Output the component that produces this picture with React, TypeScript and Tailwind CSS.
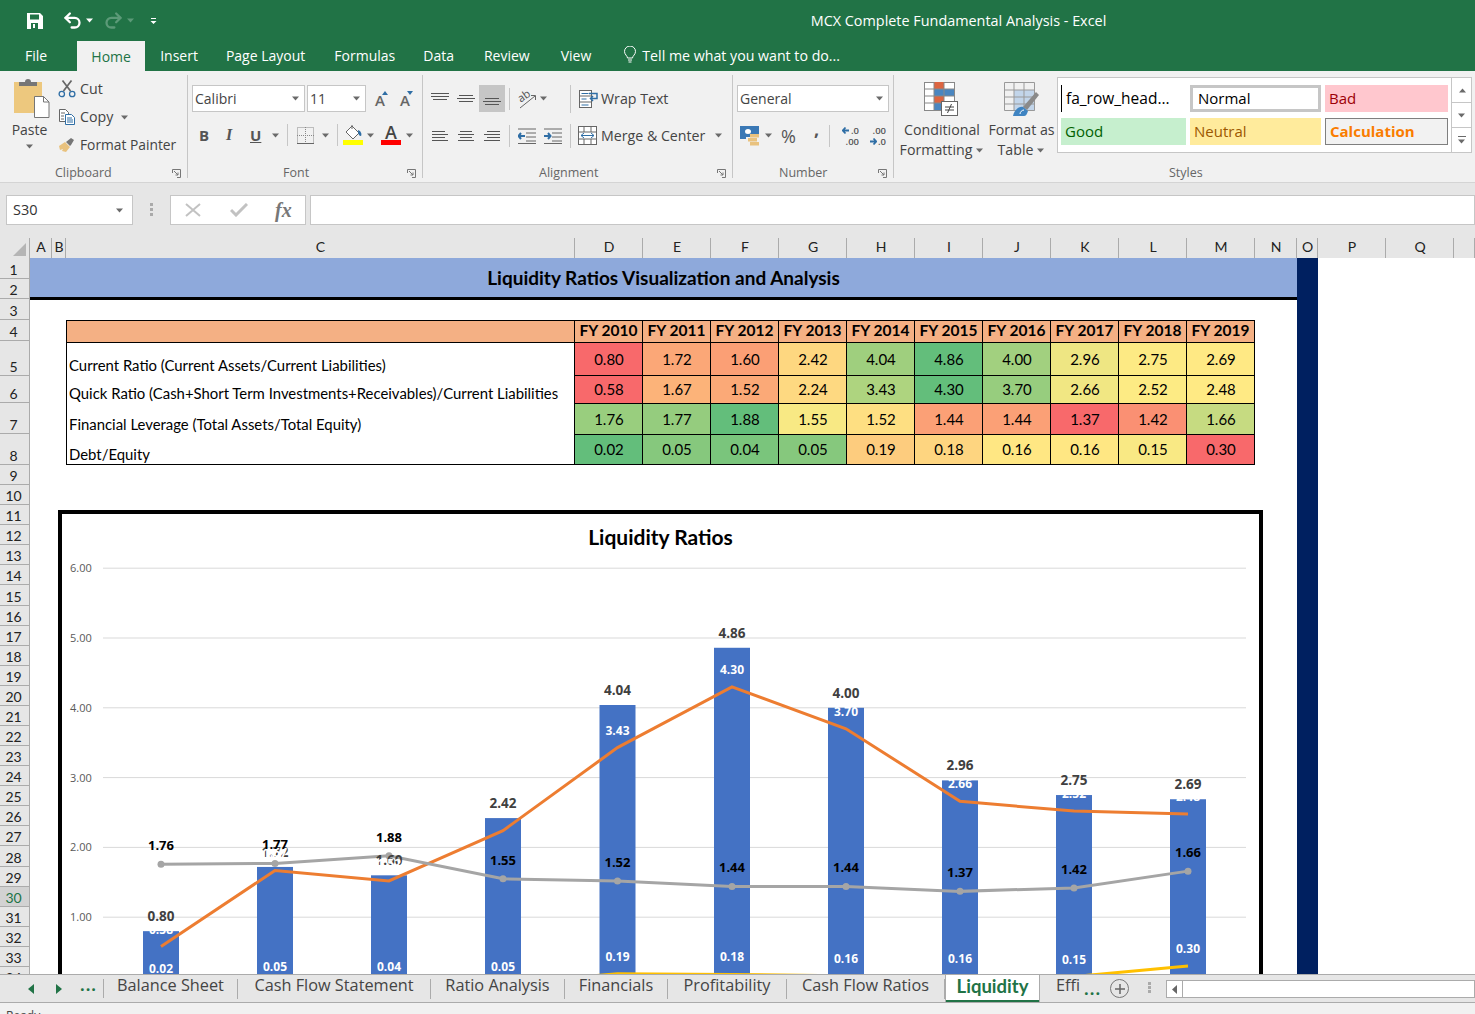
import { Redo2, Undo2 } from 'lucide-react'
import type { ReactNode } from 'react'

const COLUMNS: [string, number][] = [
  ['A', 22], ['B', 14], ['C', 509], ['D', 68], ['E', 68], ['F', 68], ['G', 68], ['H', 68], ['I', 68],
  ['J', 68], ['K', 68], ['L', 68], ['M', 68], ['N', 42], ['O', 21], ['P', 68], ['Q', 68], ['', 21],
]
const FIXED_ROWS = [21, 20, 21, 21, 35, 27, 31, 31]
const YEARS = ['FY 2010', 'FY 2011', 'FY 2012', 'FY 2013', 'FY 2014', 'FY 2015', 'FY 2016', 'FY 2017', 'FY 2018', 'FY 2019']

const CURRENT = [0.8, 1.72, 1.6, 2.42, 4.04, 4.86, 4.0, 2.96, 2.75, 2.69]
const QUICK = [0.58, 1.67, 1.52, 2.24, 3.43, 4.3, 3.7, 2.66, 2.52, 2.48]
const LEVERAGE = [1.76, 1.77, 1.88, 1.55, 1.52, 1.44, 1.44, 1.37, 1.42, 1.66]
const DEBT = [0.02, 0.05, 0.04, 0.05, 0.19, 0.18, 0.16, 0.16, 0.15, 0.3]

const METRICS = [
  { label: 'Current Ratio (Current Assets/Current Liabilities)', values: CURRENT, lowIsGood: false },
  { label: 'Quick Ratio (Cash+Short Term Investments+Receivables)/Current Liabilities', values: QUICK, lowIsGood: false },
  { label: 'Financial Leverage (Total Assets/Total Equity)', values: LEVERAGE, lowIsGood: false },
  { label: 'Debt/Equity', values: DEBT, lowIsGood: true },
]

const TABS = [
  { name: 'Balance Sheet', width: 'w-[134px]' },
  { name: 'Cash Flow Statement', width: 'w-[193px]' },
  { name: 'Ratio Analysis', width: 'w-[134px]' },
  { name: 'Financials', width: 'w-[103px]' },
  { name: 'Profitability', width: 'w-[119px]' },
  { name: 'Cash Flow Ratios', width: 'w-[158px]' },
]

// excel's 3 colour scale: red, yellow at the median, green
function heat(values: number[], v: number, lowIsGood: boolean) {
  const sorted = [...values].sort((a, b) => a - b)
  const mid = (sorted[4] + sorted[5]) / 2
  const min = sorted[0]
  const max = sorted[9]
  const red = [248, 105, 107]
  const yellow = [255, 235, 132]
  const green = [99, 190, 123]
  const low = lowIsGood ? green : red
  const high = lowIsGood ? red : green
  const [from, to, t] = v <= mid ? [low, yellow, (v - min) / (mid - min)] : [yellow, high, (v - mid) / (max - mid)]
  const c = from.map((x, i) => Math.round(x + (to[i] - x) * t))
  return `rgb(${c[0]}, ${c[1]}, ${c[2]})`
}

const BAR_X = [161, 275, 389, 503, 617.5, 732, 846, 960, 1074, 1188]
const yOf = (v: number) => 987 - v * 69.8
const points = (vals: number[]) => vals.map((v, i) => `${BAR_X[i]},${yOf(v)}`).join(' ')

function Caret({ className = 'fill-[#6a6a6a]' }: { className?: string }) {
  return (
    <svg width="8" height="5" viewBox="0 0 8 5" className={className}>
      <path d="M0 0.5h7L3.5 4.5z" />
    </svg>
  )
}

function Launcher() {
  return (
    <svg width="9" height="9" viewBox="0 0 9 9" fill="none" stroke="#777">
      <path d="M0.5 4V0.5H8.5V8.5H5" />
      <path d="M2 2l4 4M6 3.5V6H3.5" />
    </svg>
  )
}

function Group({ width, label, labelPad, children }: { width: string; label: string; labelPad: string; children: ReactNode }) {
  return (
    <div className={`${width} mt-[4px] flex h-[103px] shrink-0 flex-col border-r border-[#c6c6c6]`}>
      <div className="min-h-0 flex-1">{children}</div>
      <div className="flex h-[12px] items-center justify-between pr-[6px] pt-[2px] text-[12.5px] text-[#666]">
        <span className={labelPad}>{label}</span>
        {label !== 'Styles' && <Launcher />}
      </div>
    </div>
  )
}

function Lines({ rows, h = 14 }: { rows: [number, number, number][]; h?: number }) {
  return (
    <svg width="20" height={h} viewBox={`0 0 20 ${h}`} stroke="#555" strokeWidth="1">
      {rows.map(([a, b, y]) => (
        <line key={y} x1={a} x2={b} y1={y + 0.5} y2={y + 0.5} />
      ))}
    </svg>
  )
}

function Sep({ h = 'h-[22px]' }: { h?: string }) {
  return <div className={`${h} w-px bg-[#c6c6c6]`} />
}

function Combo({ text, className }: { text: string; className: string }) {
  return (
    <div className={`flex h-[27px] items-center justify-between border border-[#c6c6c6] bg-white pl-[2px] pr-[4px] text-[14px] text-[#444] ${className}`}>
      <span>{text}</span>
      <Caret />
    </div>
  )
}

function StyleCell({ className, children }: { className: string; children: ReactNode }) {
  return <div className={`flex h-[27px] items-center pl-[4px] text-[15px] ${className}`}>{children}</div>
}

function PasteIcon() {
  return (
    <svg width="36" height="40" viewBox="0 0 36 40">
      <rect x="0" y="4" width="28" height="31" fill="#edc87e" />
      <path d="M5 4h6a3 3 0 0 1 6 0h6v4H5z" fill="#767676" />
      <path d="M20.5 18.5h9l5.5 5.5v15.5h-14.5z" fill="#fff" stroke="#767676" />
      <path d="M29.5 18.5v5.5h5.5" fill="none" stroke="#767676" />
    </svg>
  )
}

function ScissorsIcon() {
  return (
    <svg width="18" height="18" viewBox="0 0 18 18" fill="none">
      <path d="M5.5 11L13.500 0.500M12.500 11L4.500 0.500" stroke="#666" strokeWidth="1.700" />
      <circle cx="3.800" cy="14" r="2.700" stroke="#2f6ea5" strokeWidth="1.300" />
      <circle cx="14.200" cy="14" r="2.700" stroke="#2f6ea5" strokeWidth="1.300" />
    </svg>
  )
}

function CopyIcon() {
  return (
    <svg width="18" height="18" viewBox="0 0 18 18" fill="#fff" stroke="#666">
      <path d="M1.5 1.5h6l3 3v9h-9z" />
      <path d="M7.5 6.5h6l3 3v7h-9z" stroke="#2f6ea5" />
      <path d="M3 5h4M3 8h3M3 11h3" />
      <path d="M9 10h5M9 12h6M9 14h6" stroke="#2f6ea5" />
    </svg>
  )
}

function BrushIcon() {
  return (
    <svg width="18" height="16" viewBox="0 0 18 16">
      <path d="M1 9l6-4 5 5-4 5-4-1 1-2-3 1z" fill="#e9c27e" />
      <path d="M8 5l5-4 3 2-3 5-1 1z" fill="#767676" />
    </svg>
  )
}

function GrowFont({ up }: { up: boolean }) {
  return (
    <div className="flex h-[20px] w-[17px] items-start pt-[2px]">
      <span className="text-[15px] font-semibold leading-[18px] text-[#666]">A</span>
      <svg width="6" height="4" viewBox="0 0 6 4" fill="#2f6ea5" className="-ml-[3px] shrink-0">
        <path d={up ? 'M0 4L3 0l3 4z' : 'M0 0h6L3 4z'} />
      </svg>
    </div>
  )
}

function BordersIcon() {
  return (
    <svg width="17" height="17" viewBox="0 0 17 17" fill="none" stroke="#888" strokeDasharray="1 1">
      <rect x="0.5" y="0.5" width="16" height="16" />
      <path d="M8.5 0v17M0 8.5h17" />
      <path d="M0 16.5h17" strokeDasharray="none" stroke="#666" />
    </svg>
  )
}

function FillIcon() {
  return (
    <div className="flex flex-col items-center">
      <svg width="20" height="15" viewBox="0 0 20 15" fill="none">
        <path d="M9 1l7 7-6 6-7-7z" fill="#fff" stroke="#666" />
        <path d="M9 4V0" stroke="#666" />
        <path d="M15 5c3 1 4 4 3 6-2 0-3-2-3-6z" fill="#2f6ea5" />
      </svg>
      <div className="h-[5px] w-[20px] bg-[#ffff00]" />
    </div>
  )
}

function ColorA() {
  return (
    <div className="flex flex-col items-center">
      <span className="h-[15px] text-[18px] font-semibold leading-[15px] text-[#444]">A</span>
      <div className="h-[5px] w-[20px] bg-[#ff0000]" />
    </div>
  )
}

function OrientIcon() {
  return (
    <div className="relative h-[22px] w-[22px]">
      <svg width="22" height="22" viewBox="0 0 22 22" fill="none" stroke="#666">
        <path d="M4 20L19 8M15 7.500h4.500v4.500" />
      </svg>
      <span className="absolute left-[1px] top-[1px] -rotate-[35deg] text-[11px] leading-[13px] text-[#555]">ab</span>
    </div>
  )
}

function IndentIcon({ flip }: { flip: boolean }) {
  return (
    <svg width="18" height="16" viewBox="0 0 18 16" fill="none">
      <path d="M0 1h18M8 5h10M8 9h10M8 13h10M0 15.5h18" stroke="#666" />
      <path d={flip ? 'M1 8h6M3 5L0.5 8 3 11' : 'M0 8h6M4 5l2.5 3L4 11'} stroke="#2f6ea5" strokeWidth="2" />
    </svg>
  )
}

function WrapIcon() {
  return (
    <svg width="20" height="18" viewBox="0 0 20 18" fill="none">
      <rect x="0.5" y="0.5" width="12" height="17" fill="#fff" stroke="#666" />
      <path d="M0 6h12M0 12h12" stroke="#666" />
      <path d="M2.5 3.5h7M2.5 9h5M2.5 15h7" stroke="#2f6ea5" />
      <path d="M10 3.5h8v5h-6M14 6l-2.5 2.5L14 11" stroke="#2f6ea5" strokeWidth="1.5" />
    </svg>
  )
}

function MergeIcon() {
  return (
    <svg width="19" height="19" viewBox="0 0 19 19" fill="#fff">
      <rect x="0.5" y="0.5" width="18" height="18" stroke="#666" />
      <path d="M0 6h19M0 13h19M6 0v6M13 0v6M6 13v6M13 13v6" stroke="#666" fill="none" />
      <path d="M3 9.5h13M6 7L3 9.5 6 12M13 7l3 2.5-3 2.5" stroke="#2f6ea5" fill="none" />
    </svg>
  )
}

function CurrencyIcon() {
  return (
    <svg width="20" height="20" viewBox="0 0 20 20">
      <rect x="0" y="0" width="19" height="11" fill="#3a78b5" />
      <ellipse cx="8" cy="5.500" rx="3" ry="2.500" fill="#fff" />
      <path d="M0 11h6v2H0z" fill="#3a78b5" />
      <path d="M10 8h9v3.500h-9zM8 12h9v3.500H8zM10 16h9v3.500h-9z" fill="#e9c27e" />
    </svg>
  )
}

function DecimalIcon({ more }: { more: boolean }) {
  const arrow = more ? 'M1 4.500h6M3.500 1.500L0.800 4.500l2.700 3' : 'M1 4.500h6M4.500 1.500l2.700 3-2.700 3'
  const Arrow = (
    <svg width="8" height="9" viewBox="0 0 8 9" fill="none" stroke="#2f6ea5" strokeWidth="1.800" className="shrink-0">
      <path d={arrow} />
    </svg>
  )
  return (
    <div className="flex h-[22px] w-[22px] flex-col items-end justify-center text-[9.5px] font-semibold leading-[11px] text-[#555]">
      <div className="flex items-center gap-[1px]">
        {more ? Arrow : null}
        <span>{more ? '.0' : '.00'}</span>
      </div>
      <div className="flex items-center gap-[1px]">
        {more ? null : Arrow}
        <span>{more ? '.00' : '.0'}</span>
      </div>
    </div>
  )
}

function CondFormatIcon() {
  return (
    <svg width="36" height="35" viewBox="0 0 36 35" fill="#fff">
      <rect x="0.5" y="0.5" width="30" height="28" stroke="#888" />
      <path d="M10 0h10v7H10z" fill="#dc6541" />
      <path d="M10 7h20v7H10z" fill="#4a86c0" />
      <path d="M10 14h10v7H10z" fill="#dc6541" />
      <path d="M10 21h10v7H10z" fill="#4a86c0" />
      <path d="M0 7h30M0 14h30M0 21h30M10 0v28M20 0v28" stroke="#888" fill="none" />
      <rect x="17.5" y="19.5" width="16" height="14" stroke="#666" />
      <path d="M21 25h9M21 28h9M27.5 22l-4 9" stroke="#444" fill="none" />
    </svg>
  )
}

function TableIcon() {
  return (
    <svg width="36" height="35" viewBox="0 0 36 35" fill="none">
      <rect x="10" y="8" width="21" height="21" fill="#c2d5ea" />
      <path d="M0.5 0.5h30v28h-30zM0 8h30M0 15h30M0 22h30M10 0v28M20 0v28" stroke="#999" />
      <path d="M19 25l13-15 3 3-12 15z" fill="#8a8a8a" />
      <path d="M9 34c1-6 6-10 10-9l5 4c-1 3-2 5-4 5z" fill="#3f84c2" />
      <path d="M16 32c0-2 2-4 4-4" stroke="#fff" />
    </svg>
  )
}

function QuickAccess() {
  return (
    <div className="flex h-[41px] items-center bg-[#217346] text-white">
      <div className="flex items-center pl-[27px]">
        <svg width="16" height="16" viewBox="0 0 16 16">
          <path fillRule="evenodd" fill="#fff" d="M0 0h13l3 3v13H0zM3 1.5v5h9v-5zM4 10v6h7v-6zM6 11h2v4H6z" />
        </svg>
        <Undo2 size={21} strokeWidth={2.6} className="ml-[19px]" />
        <Caret className="ml-[3px] fill-white" />
        <Redo2 size={21} strokeWidth={2.6} className="ml-[9px] text-[#5c9a78]" />
        <Caret className="ml-[3px] fill-[#5c9a78]" />
        <svg width="8" height="8" viewBox="0 0 8 8" fill="#fff" className="ml-[15px]">
          <path d="M1 1h5v1H1zM0.5 4h6L3.5 7z" />
        </svg>
      </div>
      <div className="absolute left-0 right-0 flex justify-center pl-[442px] text-[14.4px] text-white">
        MCX Complete Fundamental Analysis - Excel
      </div>
    </div>
  )
}

function TabsRow() {
  return (
    <div className="flex h-[30px] items-end bg-[#217346] text-[14px] text-white">
      <span className="ml-[25px] h-[26px]">File</span>
      <div className="ml-[30px] flex h-[30px] w-[68px] items-center justify-center bg-[#f1f1f1] text-[#217346]">Home</div>
      <span className="ml-[15px] h-[26px]">Insert</span>
      <span className="ml-[28px] h-[26px]">Page Layout</span>
      <span className="ml-[29px] h-[26px]">Formulas</span>
      <span className="ml-[28px] h-[26px]">Data</span>
      <span className="ml-[30px] h-[26px]">Review</span>
      <span className="ml-[31px] h-[26px]">View</span>
      <div className="ml-[32px] flex h-[26px] items-start">
        <svg width="14" height="18" viewBox="0 0 14 18" fill="none" stroke="#fff" className="mt-[1px]">
          <path d="M4.5 12c0-2-3-3.500-3-6.500a5.500 5.500 0 0 1 11 0c0 3-3 4.500-3 6.500z" />
          <path d="M5 14h4M5.500 16h3" />
        </svg>
        <span className="ml-[5px] text-[14.2px]">Tell me what you want to do...</span>
      </div>
    </div>
  )
}

function Ribbon() {
  return (
    <div className="flex h-[112px] border-b border-[#d4d4d4] bg-[#f1f1f1] text-[14.2px] text-[#444]">
      <Group width="w-[188px]" label="Clipboard" labelPad="pl-[55px]">
        <div className="flex">
          <div className="ml-[14px] mt-[3px] flex w-[36px] flex-col items-center">
            <PasteIcon />
            <span className="mr-[5px] mt-[3px] text-[14px] leading-[17px]">Paste</span>
            <Caret className="mr-[5px] mt-[6px] fill-[#6a6a6a]" />
          </div>
          <div className="ml-[8px] flex flex-col">
            <div className="flex h-[28px] items-center gap-[4px]">
              <ScissorsIcon />
              <span>Cut</span>
            </div>
            <div className="flex h-[28px] items-center gap-[4px]">
              <CopyIcon />
              <span>Copy</span>
              <Caret className="ml-[4px] fill-[#6a6a6a]" />
            </div>
            <div className="flex h-[28px] items-center gap-[4px] text-[13.8px]">
              <BrushIcon />
              <span>Format Painter</span>
            </div>
          </div>
        </div>
      </Group>
      <Group width="w-[235px]" label="Font" labelPad="pl-[95px]">
        <div className="flex flex-col pl-[4px] pt-[10px]">
          <div className="flex items-center">
            <Combo text="Calibri" className="w-[113px]" />
            <Combo text="11" className="ml-[2px] w-[59px]" />
            <div className="ml-[9px]"><GrowFont up /></div>
            <div className="ml-[8px]"><GrowFont up={false} /></div>
          </div>
          <div className="mt-[9px] flex h-[28px] items-center">
            <span className="ml-[7px] w-[16px] text-[15px] font-bold text-[#555]">B</span>
            <span className="ml-[11px] w-[14px] font-['Liberation_Serif'] text-[16px] font-bold italic text-[#555]">I</span>
            <span className="ml-[10px] w-[14px] text-[15px] font-bold text-[#555] underline">U</span>
            <Caret className="ml-[8px] fill-[#6a6a6a]" />
            <div className="ml-[7px]"><Sep /></div>
            <div className="ml-[9px]"><BordersIcon /></div>
            <Caret className="ml-[8px] fill-[#6a6a6a]" />
            <div className="ml-[7px]"><Sep /></div>
            <div className="ml-[5px]"><FillIcon /></div>
            <Caret className="ml-[4px] fill-[#6a6a6a]" />
            <div className="ml-[6px]"><ColorA /></div>
            <Caret className="ml-[5px] fill-[#6a6a6a]" />
          </div>
        </div>
      </Group>
      <Group width="w-[310px]" label="Alignment" labelPad="pl-[116px]">
        <div className="flex flex-col pl-[4px] pt-[10px]">
          <div className="flex h-[27px] items-center">
            <div className="flex h-[27px] w-[26px] items-center justify-center"><Lines rows={[[1, 19, 1], [1, 19, 4], [3, 17, 7]]} /></div>
            <div className="flex h-[27px] w-[26px] items-center justify-center"><Lines rows={[[3, 17, 3], [1, 19, 6], [3, 17, 9]]} /></div>
            <div className="flex h-[27px] w-[26px] items-center justify-center bg-[#c6c6c6]"><Lines rows={[[3, 17, 6], [1, 19, 9], [3, 17, 12]]} /></div>
            <div className="ml-[4px]"><Sep /></div>
            <div className="ml-[6px]"><OrientIcon /></div>
            <Caret className="ml-[2px] fill-[#6a6a6a]" />
            <div className="ml-[22px]"><Sep h="h-[28px]" /></div>
            <div className="ml-[8px]"><WrapIcon /></div>
            <span className="ml-[2px]">Wrap Text</span>
          </div>
          <div className="mt-[10px] flex h-[27px] items-center">
            <div className="flex h-[27px] w-[26px] items-center justify-center"><Lines rows={[[2, 15, 2], [2, 18, 5], [2, 15, 8], [2, 18, 11]]} /></div>
            <div className="flex h-[27px] w-[26px] items-center justify-center"><Lines rows={[[4, 16, 2], [2, 18, 5], [4, 16, 8], [2, 18, 11]]} /></div>
            <div className="flex h-[27px] w-[26px] items-center justify-center"><Lines rows={[[5, 18, 2], [2, 18, 5], [5, 18, 8], [2, 18, 11]]} /></div>
            <div className="ml-[4px]"><Sep /></div>
            <div className="ml-[8px]"><IndentIcon flip /></div>
            <div className="ml-[8px]"><IndentIcon flip={false} /></div>
            <div className="ml-[8px]"><Sep h="h-[24px]" /></div>
            <div className="ml-[7px]"><MergeIcon /></div>
            <span className="ml-[4px]">Merge &amp; Center</span>
            <Caret className="ml-[10px] fill-[#6a6a6a]" />
          </div>
        </div>
      </Group>
      <Group width="w-[161px]" label="Number" labelPad="pl-[46px]">
        <div className="flex flex-col pl-[4px] pt-[10px]">
          <Combo text="General" className="w-[152px]" />
          <div className="mt-[10px] flex h-[27px] items-center">
            <div className="ml-[3px]"><CurrencyIcon /></div>
            <Caret className="ml-[5px] fill-[#6a6a6a]" />
            <span className="ml-[8px] text-[18px] leading-none text-[#555]">%</span>
            <span className="ml-[18px] -mt-[14px] text-[18px] font-bold leading-none text-[#555]">,</span>
            <div className="ml-[10px]"><Sep /></div>
            <div className="ml-[7px]"><DecimalIcon more /></div>
            <div className="ml-[5px]"><DecimalIcon more={false} /></div>
          </div>
        </div>
      </Group>
      <Group width="w-[582px]" label="Styles" labelPad="pl-[275px]">
        <div className="flex">
          <div className="ml-[9px] flex w-[78px] flex-col items-center">
            <div className="mt-[7px] h-[38px]"><CondFormatIcon /></div>
            <span className="leading-[20px]">Conditional</span>
            <span className="flex items-center gap-[4px] leading-[20px]">Formatting <Caret /></span>
          </div>
          <div className="ml-[8px] flex w-[65px] flex-col items-center">
            <div className="mt-[7px] h-[38px]"><TableIcon /></div>
            <span className="leading-[20px] whitespace-nowrap">Format as</span>
            <span className="flex items-center gap-[4px] leading-[20px]">Table <Caret /></span>
          </div>
          <div className="ml-[3px] mt-[2px] flex h-[76px] w-[395px] border border-[#c6c6c6] bg-white">
            <div className="grid flex-1 grid-cols-[125px_131px_123px] content-start gap-x-[4px] gap-y-[6px] pl-[3px] pt-[7px]">
              <div className="flex h-[27px] items-center whitespace-nowrap text-[15.5px] text-black">
                <span className="mr-[4px] h-[27px] w-px bg-black" />fa_row_head…
              </div>
              <StyleCell className="border-[3px] border-[#c6c6c6] !pl-[5px] text-black">Normal</StyleCell>
              <StyleCell className="bg-[#ffc7ce] text-[#9c0006]">Bad</StyleCell>
              <StyleCell className="bg-[#c6efce] text-[#006100]">Good</StyleCell>
              <StyleCell className="bg-[#ffeb9c] text-[#9c5700]">Neutral</StyleCell>
              <StyleCell className="border border-[#7f7f7f] bg-[#f2f2f2] font-bold text-[#fa7d00]">Calculation</StyleCell>
            </div>
          </div>
          <div className="mt-[2px] flex h-[76px] w-[20px] flex-col border border-l-0 border-[#c6c6c6] bg-white">
            <div className="flex h-[25px] items-center justify-center border-b border-[#c6c6c6]">
              <Caret className="rotate-180 fill-[#6a6a6a]" />
            </div>
            <div className="flex h-[25px] items-center justify-center border-b border-[#c6c6c6]">
              <Caret className="fill-[#6a6a6a]" />
            </div>
            <div className="flex flex-1 flex-col items-center justify-center gap-[2px]">
              <div className="h-px w-[8px] bg-[#6a6a6a]" />
              <Caret className="fill-[#6a6a6a]" />
            </div>
          </div>
        </div>
      </Group>
    </div>
  )
}

function FormulaBar() {
  return (
    <div className="flex h-[55px] items-start bg-[#e6e6e6] pl-[6px] pt-[12px] text-[14.5px] text-[#333]">
      <div className="flex h-[30px] w-[127px] items-center justify-between border border-[#c6c6c6] bg-white pl-[6px] pr-[8px]">
        <span>S30</span>
        <Caret />
      </div>
      <div className="ml-[17px] mt-[8px] flex flex-col gap-[2px]">
        <div className="h-[3px] w-[3px] bg-[#aaa]" />
        <div className="h-[3px] w-[3px] bg-[#aaa]" />
        <div className="h-[3px] w-[3px] bg-[#aaa]" />
      </div>
      <div className="ml-[17px] flex h-[30px] w-[136px] items-center border border-[#c6c6c6] bg-white">
        <svg width="16" height="14" viewBox="0 0 16 14" stroke="#c2c2c2" strokeWidth="2" className="ml-[14px]">
          <path d="M1 1l14 12M15 1L1 13" />
        </svg>
        <svg width="18" height="14" viewBox="0 0 18 14" fill="none" stroke="#c2c2c2" strokeWidth="3" className="ml-[29px]">
          <path d="M1 7l5 5L17 1" />
        </svg>
        <span className="ml-[27px] font-['Liberation_Serif'] text-[20px] font-bold italic leading-none text-[#777]">fx</span>
      </div>
      <div className="ml-[4px] h-[30px] flex-1 border border-[#c6c6c6] bg-white" />
    </div>
  )
}

function ColumnHeaders() {
  return (
    <div className="flex h-[20px] items-stretch bg-[#e6e6e6] font-['Lato'] text-[14px] text-[#222]">
      <div className="flex w-[30px] items-end justify-end border-r border-[#ababab] pb-[2px] pr-[3px]">
        <svg width="13" height="13" viewBox="0 0 13 13" fill="#b5b5b5"><path d="M13 0v13H0z" /></svg>
      </div>
      {COLUMNS.map(([name, w]) => (
        <div
          key={name || 'R'}
          style={{ width: w }}
          className="flex shrink-0 items-center justify-center border-r border-[#ababab] pb-[3px] pl-[1px]"
        >
          {name}
        </div>
      ))}
    </div>
  )
}

function RowHeaders() {
  const rows = [...FIXED_ROWS, ...Array.from({ length: 26 }, () => 20.08)]
  return (
    <div className="flex w-[30px] shrink-0 flex-col border-r border-[#ababab] bg-[#e6e6e6] font-['Lato'] text-[14px] text-[#222]">
      {rows.map((h, i) => (
        <div
          key={i}
          style={{ height: h }}
          className={`flex shrink-0 items-end justify-center border-b border-[#ababab] pr-[2px] leading-[16px] ${i === 29 ? 'bg-[#d2d2d2] text-[#217346]' : ''}`}
        >
          {i + 1}
        </div>
      ))}
    </div>
  )
}

function RatioTable() {
  return (
    <div className="ml-[36px] mt-[20px] grid w-[1189px] grid-cols-[508px_repeat(10,68px)] grid-rows-[22px_33px_28px_31px_30px] border-b border-r border-black font-['Lato'] text-[15px] text-black">
      <div className="border-l border-t border-black bg-[#f4b084]" />
      {YEARS.map((y) => (
        <div key={y} className="flex items-center justify-center border-l border-t border-black bg-[#f4b084] pb-[2px] text-[15.5px] font-bold">
          {y}
        </div>
      ))}
      {METRICS.map((m, row) => (
        <div key={m.label} className="contents">
          <div className={`flex items-end border-l border-black pl-[2px] text-[14.9px] leading-[20px] whitespace-nowrap ${row === 0 ? 'border-t' : ''}`}>
            {m.label}
          </div>
          {m.values.map((v, i) => (
            <div
              key={i}
              style={{ background: heat(m.values, v, m.lowIsGood) }}
              className="flex items-center justify-center border-l border-t border-black pl-[1px]"
            >
              {v.toFixed(2)}
            </div>
          ))}
        </div>
      ))}
    </div>
  )
}

function DataLabels({ vals, offset, className }: { vals: number[]; offset: number; className: string }) {
  return (
    <g className={className} textAnchor="middle">
      {vals.map((v, i) => (
        <text key={i} x={BAR_X[i]} y={yOf(v) + offset}>
          {v.toFixed(2)}
        </text>
      ))}
    </g>
  )
}

function Chart() {
  return (
    <div className="ml-[28px] mt-[45px] h-[600px] w-[1205px] shrink-0 border-4 border-black bg-white">
      <div className="flex h-[44px] items-center justify-center pt-[2px] font-['Lato'] text-[21px] font-bold text-black">Liquidity Ratios</div>
      <svg width="1197" height="548" viewBox="62 558 1197 548" className="font-['Open_Sans']">
        <g stroke="#d9d9d9">
          {[6, 5, 4, 3, 2, 1, 0].map((n) => (
            <line key={n} x1="103" x2="1246" y1={yOf(n)} y2={yOf(n)} />
          ))}
        </g>
        <g fontSize="11" fill="#595959">
          {[6, 5, 4, 3, 2, 1].map((n) => (
            <text key={n} x="70" y={yOf(n) + 4}>{n.toFixed(2)}</text>
          ))}
        </g>
        {CURRENT.map((v, i) => (
          <rect key={i} x={BAR_X[i] - 18} y={yOf(v)} width="36" height={v * 69.8} fill="#4472c4" />
        ))}
        <polyline points={points(DEBT)} fill="none" stroke="#ffc000" strokeWidth="3" />
        <polyline points={points(QUICK)} fill="none" stroke="#ed7d31" strokeWidth="3" />
        <polyline points={points(LEVERAGE)} fill="none" stroke="#a5a5a5" strokeWidth="3" />
        <g fill="#a5a5a5">
          {LEVERAGE.map((v, i) => (
            <circle key={i} cx={BAR_X[i]} cy={yOf(v)} r="3.500" />
          ))}
        </g>
        <DataLabels vals={CURRENT} offset={-10} className="fill-[#404040] text-[13.5px] font-bold" />
        <DataLabels vals={QUICK} offset={-13} className="fill-white text-[12px] font-bold" />
        <DataLabels vals={LEVERAGE} offset={-14} className="fill-black text-[13px] font-bold" />
        <DataLabels vals={DEBT} offset={-13} className="fill-white text-[12px] font-bold" />
      </svg>
    </div>
  )
}

function Sheet() {
  return (
    <div className="flex h-[716px] overflow-hidden bg-white">
      <RowHeaders />
      <div className="flex w-[1267px] shrink-0 flex-col">
        <div className="flex h-[42px] shrink-0 items-center justify-center border-b-[3px] border-black bg-[#8ea9db] pt-[2px] font-['Lato'] text-[19px] font-bold text-black">
          Liquidity Ratios Visualization and Analysis
        </div>
        <RatioTable />
        <Chart />
      </div>
      <div className="w-[21px] shrink-0 bg-[#002060]" />
    </div>
  )
}

function SheetTabs() {
  return (
    <div className="flex h-[29px] items-stretch border-b border-t border-[#ababab] bg-[#e6e6e6] text-[16.3px] text-[#444]">
      <div className="flex w-[103px] shrink-0 items-center pl-[28px]">
        <svg width="6" height="10" viewBox="0 0 6 10" fill="#217346"><path d="M6 0v10L0 5z" /></svg>
        <svg width="6" height="10" viewBox="0 0 6 10" fill="#217346" className="ml-[22px]"><path d="M0 0v10l6-5z" /></svg>
        <span className="ml-[18px] pb-[6px] font-bold leading-none tracking-[1px] text-[#217346]">...</span>
      </div>
      <div className="my-[4px] w-px bg-[#ababab]" />
      {TABS.map((t) => (
        <div key={t.name} className={`${t.width} flex shrink-0 items-center`}>
          <span className="flex-1 pb-[6px] text-center">{t.name}</span>
          <div className="h-[20px] w-px bg-[#ababab]" />
        </div>
      ))}
      <div className="-mt-px flex w-[95px] shrink-0 items-center justify-center border-x border-t border-[#ababab] bg-white pb-[4px] font-['Lato'] text-[18.5px] font-bold text-[#217346] shadow-[inset_0_-2px_0_#217346]">
        Liquidity
      </div>
      <span className="ml-[16px] flex items-center pb-[6px]">Effi</span>
      <span className="ml-[4px] pb-[6px] font-bold leading-[28px] tracking-[1px] text-[#217346]">...</span>
      <div className="ml-[9px] mt-[4px] flex h-[19px] w-[19px] items-center justify-center rounded-full border border-[#777] text-[#666]">
        <svg width="10" height="10" viewBox="0 0 10 10" stroke="#666" strokeWidth="1.500"><path d="M5 0v10M0 5h10" /></svg>
      </div>
      <div className="ml-[19px] mt-[7px] flex flex-col gap-[1px]">
        <div className="h-[3px] w-[3px] bg-[#aaa]" />
        <div className="h-[3px] w-[3px] bg-[#aaa]" />
        <div className="h-[3px] w-[3px] bg-[#aaa]" />
      </div>
      <div className="ml-[15px] mt-[5px] flex h-[18px] flex-1 border border-[#ababab] bg-white">
        <div className="flex w-[16px] items-center justify-center border-r border-[#ababab]">
          <svg width="5" height="9" viewBox="0 0 5 9" fill="#666"><path d="M5 0v9L0 4.500z" /></svg>
        </div>
      </div>
    </div>
  )
}

export default function App() {
  return (
    <div className="relative h-[1014px] w-[1475px] overflow-hidden bg-[#f1f1f1] [font-family:'Open_Sans',sans-serif]">
      <QuickAccess />
      <TabsRow />
      <Ribbon />
      <FormulaBar />
      <ColumnHeaders />
      <Sheet />
      <SheetTabs />
      <div className="h-[11px] overflow-hidden bg-[#f1f1f1] pl-[6px] pt-[6px] text-[12px] leading-[14px] text-[#444]">Ready</div>
    </div>
  )
}
